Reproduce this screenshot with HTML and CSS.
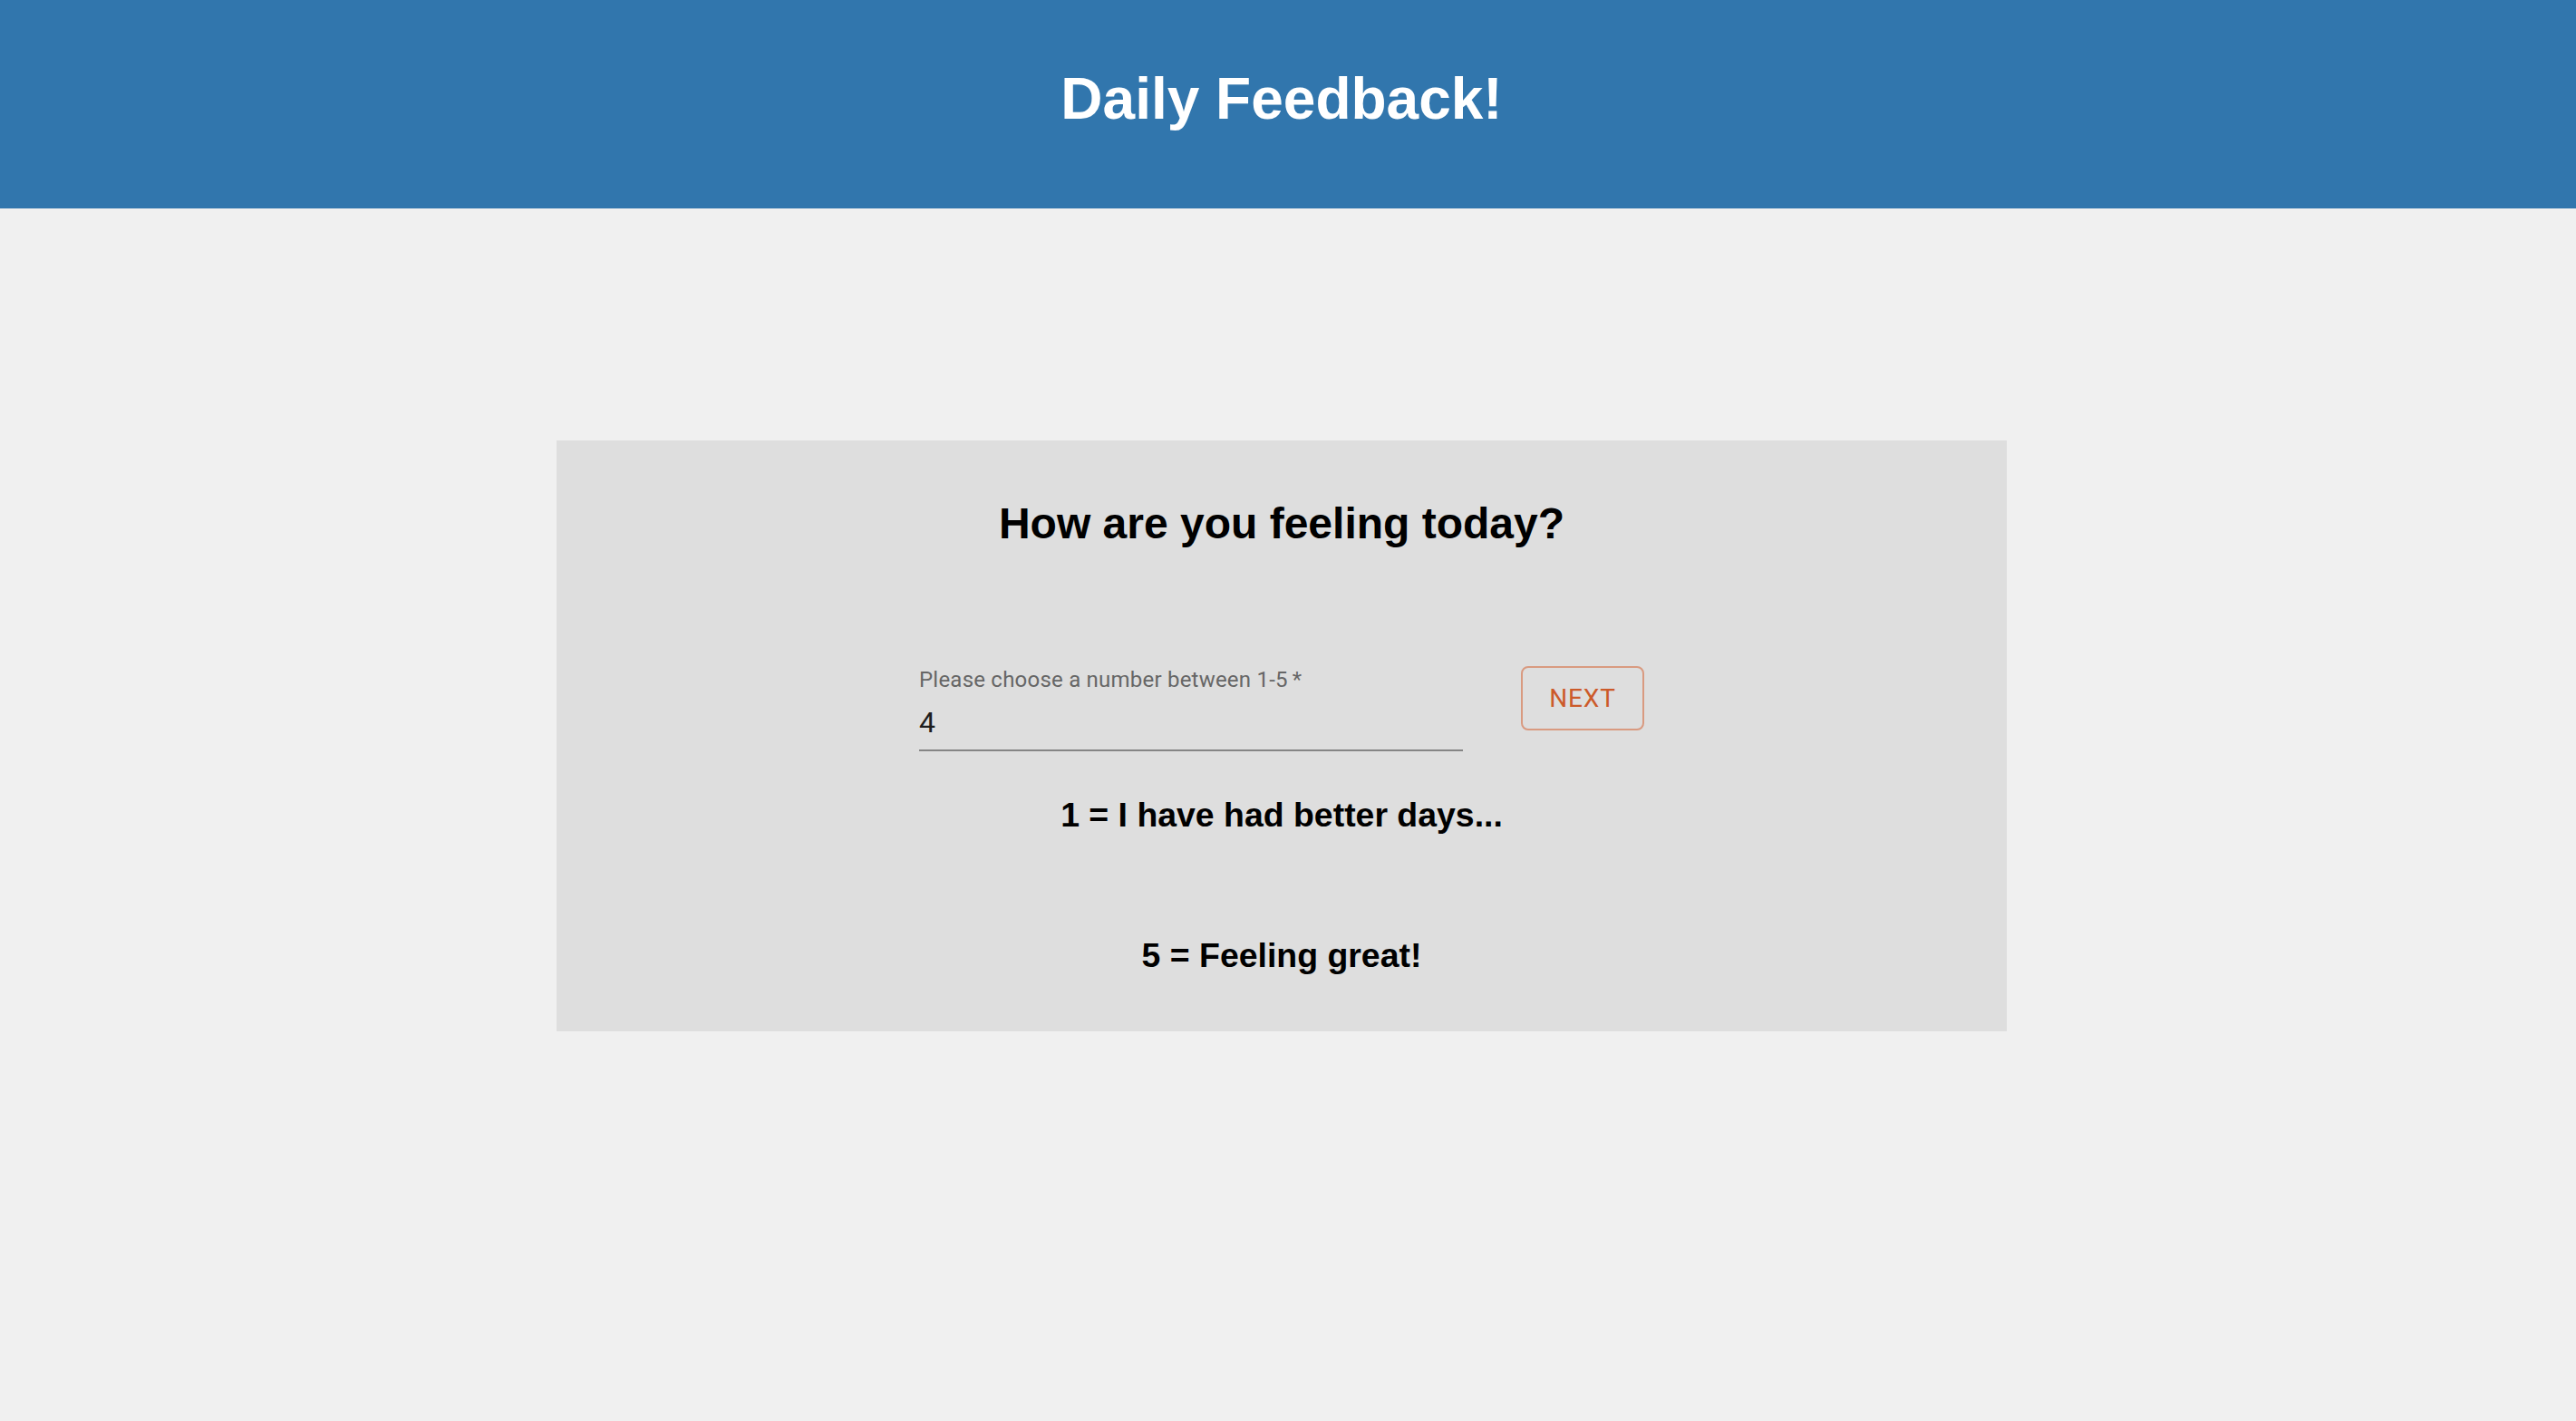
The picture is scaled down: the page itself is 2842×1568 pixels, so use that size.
FILE: index.html
```html
<!DOCTYPE html>
<html lang="en">
<head>
<meta charset="utf-8">
<title>Daily Feedback</title>
<link rel="stylesheet" href="styles.css">
</head>
<body>
<header class="app-header">
  <h1 class="app-title">Daily Feedback!</h1>
</header>
<main class="page">
  <section class="card">
    <h2 class="card-title">How are you feeling today?</h2>
    <form class="form-row" onsubmit="return false">
      <div class="field">
        <label class="field-label" for="mood">Please choose a number between 1-5&thinsp;*</label>
        <div class="field-input-wrap">
          <input id="mood" class="field-input" type="text" value="4">
        </div>
      </div>
      <button class="btn-next" type="submit">NEXT</button>
    </form>
    <h3 class="scale-text scale-low">1 = I have had better days...</h3>
    <h3 class="scale-text scale-high">5 = Feeling great!</h3>
  </section>
</main>
</body>
</html>
```
FILE: styles.css
```css
html, body {
  margin: 0;
  padding: 0;
}
body {
  background: #f0f0f0;
  font-family: "Liberation Sans", Arial, Helvetica, sans-serif;
  color: #000;
}
.app-header {
  box-sizing: border-box;
  height: 230px;
  background: #3176ad;
  padding: 71px 14px 0 0;
}
.app-title {
  margin: 0;
  text-align: center;
  color: #fff;
  font-size: 64px;
  font-weight: 700;
  line-height: 1.2;
}
.page {
  padding: 256px 14px 0 0;
  display: flex;
  justify-content: center;
}
.card {
  box-sizing: border-box;
  width: 1600px;
  height: 652px;
  background: #dedede;
  padding-top: 63px;
  display: flex;
  flex-direction: column;
  align-items: center;
}
.card-title {
  margin: 0;
  font-size: 48px;
  font-weight: 700;
  line-height: 1.2;
}
.form-row {
  margin-top: 128px;
  display: flex;
  align-items: flex-start;
  gap: 64px;
}
.field {
  position: relative;
  width: 600px;
  height: 96px;
  font-family: Roboto, "Liberation Sans", sans-serif;
}
.field-label {
  position: absolute;
  left: 0;
  top: 3px;
  font-size: 24px;
  line-height: 1;
  letter-spacing: 0.22px;
  color: #666;
  white-space: nowrap;
}
.field-input-wrap {
  position: absolute;
  left: 0;
  right: 0;
  top: 32px;
  border-bottom: 2px solid #858585;
  padding: 11px 0 11px;
}
.field-input {
  display: block;
  width: 100%;
  box-sizing: content-box;
  height: 38px;
  margin: 0;
  padding: 0;
  border: 0;
  outline: none;
  background: transparent;
  font-family: Roboto, "Liberation Sans", sans-serif;
  font-size: 32px;
  line-height: 38px;
  color: #1e1e1e;
}
.btn-next {
  box-sizing: border-box;
  width: 136px;
  height: 71px;
  border: 2px solid #d99a80;
  border-radius: 8px;
  background: transparent;
  color: #cc5a2a;
  font-family: Roboto, "Liberation Sans", sans-serif;
  font-size: 28px;
  font-weight: 400;
  letter-spacing: 0.8px;
  padding: 0;
  cursor: pointer;
}
.scale-text {
  margin: 0;
  font-size: 37.44px;
  font-weight: 700;
  line-height: 1.2;
}
.scale-low {
  margin-top: 46px;
}
.scale-high {
  margin-top: 110px;
}
```
